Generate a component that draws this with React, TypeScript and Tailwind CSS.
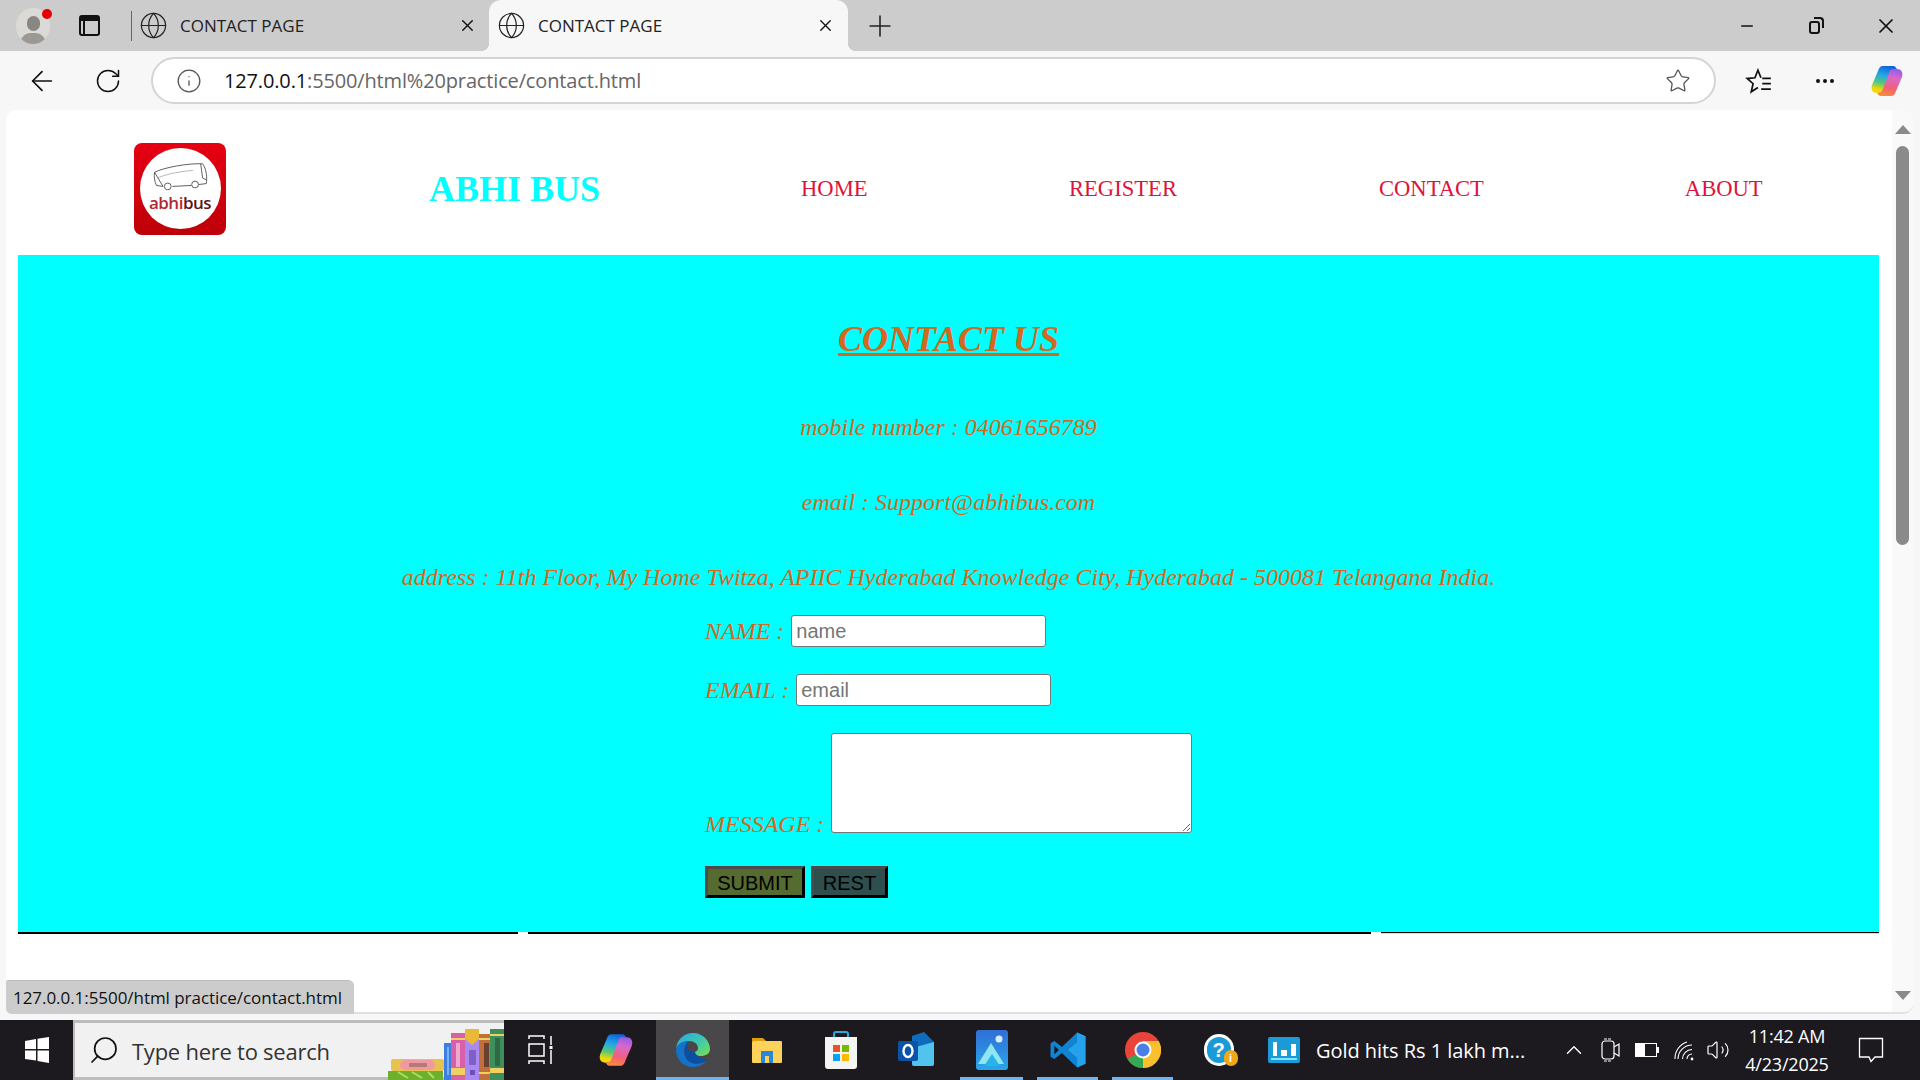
import React from "react";
import { ArrowLeft, RotateCw, Info, Star, MoreHorizontal, X, Plus, Minus, Search, Globe, ChevronUp, Volume2 } from "lucide-react";

function Logo() {
  return (
    <div className="w-[92px] h-[92px] rounded-[8px] bg-gradient-to-b from-[#e60012] to-[#bd0009] flex items-center justify-center">
      <div className="w-[81px] h-[81px] rounded-full bg-white flex flex-col items-center justify-center pb-[4px]">
        <svg width="58" height="32" viewBox="0 0 60 34" fill="none" stroke="#444" strokeWidth="0.9">
          <path d="M3 12 C12 7 40 2 54 3 C58 8 59 18 58 24 L50 25 M42 26 L22 27 M12 27 L5 26 C3 22 2 16 3 12 Z" />
          <circle cx="17" cy="27" r="3.6" />
          <circle cx="46" cy="25" r="3.6" />
          <path d="M52 3 L54 18 L58 20" />
          <path d="M6 18 C18 13 32 11 44 10" stroke="#aaa" />
        </svg>
        <div className="text-[17px] leading-[20px] font-semibold tracking-[-0.5px] font-['Open_Sans',sans-serif]">
          <span className="text-[#b5272e]">abhi</span>
          <span className="text-[#5c1414]">bus</span>
        </div>
      </div>
    </div>
  );
}

function TabFace() {
  return (
    <>
      <Globe size={29} strokeWidth={1} className="text-[#222] shrink-0" />
      <span className="ml-[12px] text-[17px] text-[#222] font-['Open_Sans',sans-serif] flex-1">CONTACT PAGE</span>
      <X size={19} strokeWidth={1.7} className="text-[#111] shrink-0" />
    </>
  );
}

function Copilot({ size = 36 }: { size?: number }) {
  const ribbon = "M14 3 C11 3 10 5 9 8 L3 22 C1.5 27 4 30 8 30 L12 30 C14 30 15 29 16 26 L22 10 C23 7 25 6 28 6 L27 5 C26 3 25 3 23 3 Z";
  return (
    <svg width={size} height={size} viewBox="0 0 36 36">
      <defs>
        <linearGradient id="cpa" x1="0.6" y1="0" x2="0.4" y2="1">
          <stop offset="0" stopColor="#1560d8" />
          <stop offset="0.35" stopColor="#20a8e8" />
          <stop offset="0.65" stopColor="#58c878" />
          <stop offset="0.9" stopColor="#f2d808" />
        </linearGradient>
        <linearGradient id="cpb" x1="0.6" y1="0" x2="0.4" y2="1">
          <stop offset="0" stopColor="#f88a3a" />
          <stop offset="0.3" stopColor="#f2607a" />
          <stop offset="0.7" stopColor="#d868c8" />
          <stop offset="1" stopColor="#9a5ce8" />
        </linearGradient>
      </defs>
      <path d={ribbon} fill="url(#cpa)" />
      <path d={ribbon} fill="url(#cpb)" transform="rotate(180 18 18)" />
    </svg>
  );
}

function Edge() {
  return (
    <svg width="36" height="36" viewBox="0 0 36 36">
      <defs>
        <linearGradient id="eg" x1="0" y1="0" x2="1" y2="0.8">
          <stop offset="0" stopColor="#2aa8e4" />
          <stop offset="0.6" stopColor="#3cc8b0" />
          <stop offset="1" stopColor="#70dc60" />
        </linearGradient>
      </defs>
      <path d="M1 18 C1 8 9 1 18 1 C28 1 35 9 35 17 C35 22 30 24 26 24 C22 24 20 22 20 20 C22 19 23 18 23 16 C23 12 19 9 14 9 C7 9 1 13 1 18 Z" fill="url(#eg)" />
      <path d="M1 18 C1 13 7 9 14 9 C9 12 8 20 11 26 C14 32 24 34 32 28 C28 33 23 35 18 35 C8 35 1 27 1 18 Z" fill="#1273c9" />
      <path d="M11 26 C8 20 9 12 14 9 C11 14 12 20 20 20 C20 24 26 26 32 28 C24 34 14 32 11 26 Z" fill="#0b4ea2" />
    </svg>
  );
}

function Folder() {
  return (
    <svg width="32" height="32" viewBox="0 0 32 32">
      <path d="M1 4 h11 l3 3 h-14 z" fill="#d9a00c" />
      <rect x="1" y="7" width="30" height="22" rx="1" fill="#fcd25a" />
      <rect x="10" y="17" width="12" height="12" fill="#2a86d6" />
      <rect x="14" y="22" width="4" height="7" fill="#fcd25a" />
    </svg>
  );
}

function Store() {
  return (
    <svg width="34" height="40" viewBox="0 0 34 40">
      <path d="M10 8 V4 a2 2 0 0 1 2 -2 h10 a2 2 0 0 1 2 2 V8" fill="none" stroke="#2aa8e0" strokeWidth="2" />
      <path d="M1 7 h32 v29 a3 3 0 0 1 -3 3 h-26 a3 3 0 0 1 -3 -3 z" fill="#f4f4f4" />
      <rect x="9" y="15" width="7" height="7" fill="#e8512a" />
      <rect x="18" y="15" width="7" height="7" fill="#7ab800" />
      <rect x="9" y="24" width="7" height="7" fill="#00a4ef" />
      <rect x="18" y="24" width="7" height="7" fill="#ffb900" />
    </svg>
  );
}

function Outlook() {
  return (
    <svg width="36" height="36" viewBox="0 0 36 36">
      <path d="M14 4 L26 0 L36 10 V32 a2 2 0 0 1 -2 2 H16 a2 2 0 0 1 -2 -2 Z" fill="#0f6cbd" />
      <path d="M14 16 L36 10 V32 a2 2 0 0 1 -2 2 H16 a2 2 0 0 1 -2 -2 Z" fill="#50c4ee" />
      <rect x="0" y="9" width="20" height="20" rx="2" fill="#0a53a8" />
      <ellipse cx="10" cy="19" rx="4.5" ry="6" fill="none" stroke="#fff" strokeWidth="2.4" />
    </svg>
  );
}

function Photos() {
  return (
    <svg width="32" height="40" viewBox="0 0 32 40">
      <defs>
        <linearGradient id="pg" x1="0" y1="0" x2="0" y2="1">
          <stop offset="0" stopColor="#2f6fd6" />
          <stop offset="1" stopColor="#2aa6e8" />
        </linearGradient>
      </defs>
      <rect width="32" height="40" rx="3" fill="url(#pg)" />
      <circle cx="23" cy="9" r="3.5" fill="#d8ecff" />
      <path d="M2 34 L15 13 L28 34 Z" fill="#8fe6f2" />
      <path d="M8 36 L16 24 L24 36 Z" fill="#26b4e8" />
    </svg>
  );
}

function VSCode() {
  return (
    <svg width="38" height="42" viewBox="0 0 100 100">
      <path d="M74 4 L96 14 V86 L74 96 L34 58 L14 74 L4 68 V32 L14 26 L34 42 Z M74 28 L48 50 L74 72 Z M14 38 V62 L26 50 Z" fill="#0f84d4" fillRule="evenodd" />
      <path d="M74 4 L96 14 V86 L74 96 Z M74 28 V72 L48 50 Z" fill="#25a2ec" fillRule="evenodd" />
    </svg>
  );
}

function Chrome() {
  return (
    <svg width="36" height="36" viewBox="0 0 36 36">
      <circle cx="18" cy="18" r="18" fill="#e8443a" />
      <path d="M18 18 L2.4 27 A18 18 0 0 0 18 36 L27 18 Z" fill="#34a853" />
      <path d="M18 18 L18 36 A18 18 0 0 0 33.6 9 L18 9 Z" fill="#fbc02d" />
      <circle cx="18" cy="18" r="8.5" fill="#fff" />
      <circle cx="18" cy="18" r="6.5" fill="#4a7fe8" />
    </svg>
  );
}

function Help() {
  return (
    <div className="relative w-[34px] h-[32px]">
      <div className="w-[30px] h-[32px] rounded-full bg-white flex items-center justify-center">
        <div className="w-[24px] h-[26px] rounded-full bg-[#1a9ad6] flex items-center justify-center text-white font-bold text-[20px] font-['Liberation_Sans',sans-serif]">?</div>
      </div>
      <div className="absolute right-0 bottom-0 w-[14px] h-[16px] rounded-full bg-[#f0a818] text-white text-[11px] font-bold flex items-center justify-center font-['Liberation_Sans',sans-serif]">i</div>
    </div>
  );
}

function Books() {
  return (
    <svg width="116" height="51" viewBox="0 0 116 51" className="absolute right-0 bottom-[-3px]">
      <rect x="0" y="42" width="55" height="9" fill="#6cb02e" />
      <path d="M10 43 L20 49 M24 43 L34 49 M40 43 L46 49" stroke="#b4dc58" strokeWidth="2" />
      <rect x="3" y="30" width="53" height="12" rx="2" fill="#e8c24e" />
      <rect x="12" y="31" width="35" height="10" rx="5" fill="#ee9aa0" />
      <rect x="21" y="34" width="18" height="4" fill="#b57a7a" />
      <rect x="56" y="14" width="7" height="37" fill="#3d7fe0" />
      <rect x="59" y="18" width="2" height="28" fill="#7ab0f4" />
      <rect x="63" y="4" width="14" height="47" fill="#d860a8" />
      <rect x="63" y="9" width="14" height="2" fill="#f0d060" />
      <rect x="68" y="14" width="4" height="24" fill="#f0a8d0" />
      <rect x="63" y="39" width="14" height="7" fill="#f0d060" />
      <rect x="77" y="0" width="14" height="51" fill="#a98af0" />
      <path d="M77 0 H91 V10 L84 16 L77 10 Z" fill="#e8b838" />
      <rect x="81" y="21" width="7" height="15" rx="1" fill="#8060c8" />
      <rect x="82" y="41" width="5" height="5" fill="#7050b8" />
      <rect x="91" y="5" width="12" height="46" fill="#c07038" />
      <rect x="91" y="9" width="12" height="2" fill="#f0d060" />
      <rect x="96" y="14" width="5" height="24" fill="#6b4030" />
      <rect x="91" y="43" width="12" height="2" fill="#f0d060" />
      <rect x="102" y="0" width="14" height="51" fill="#3f8f5c" />
      <rect x="102" y="5" width="14" height="2" fill="#f0d060" />
      <rect x="107" y="9" width="5" height="28" fill="#2d6a45" />
      <rect x="102" y="39" width="14" height="5" fill="#f0d060" />
    </svg>
  );
}

const TaskSlot = ({ w, active, bar, children }: { w: string; active?: boolean; bar?: boolean; children: React.ReactNode }) => (
  <div className={`${w} h-full relative flex items-center justify-center shrink-0 ${active ? "bg-[#4a474b]" : ""}`}>
    {children}
    {bar && <div className={`absolute bottom-0 h-[3px] bg-[#6fb4ee] ${active ? "left-0 right-0" : "left-[7px] right-[7px]"}`} />}
  </div>
);

export default function App() {
  return (
    <div className="w-[1920px] h-[1080px] overflow-hidden flex flex-col bg-[#f7f7f7] font-['Open_Sans',sans-serif]">
      {/* Tab strip */}
      <div className="h-[51px] bg-[#cccccc] flex items-end shrink-0">
        <div className="w-[66px] h-full flex items-center justify-center relative shrink-0">
          <div className="w-[34px] h-[36px] rounded-full bg-[#dcdad6] flex flex-col items-center justify-end overflow-hidden">
            <div className="w-[13px] h-[15px] rounded-full bg-[#8a8682] mb-[2px]" />
            <div className="w-[26px] h-[11px] rounded-t-full bg-[#9c9894]" />
          </div>
          <div className="absolute w-[10px] h-[10px] rounded-full bg-[#e60000] left-[42px] top-[9px]" />
        </div>
        <div className="w-[38px] h-full flex items-center justify-center ml-[4px] shrink-0">
          <div className="w-[21px] h-[21px] rounded-[3px] border-2 border-[#111] border-t-[6px] flex">
            <div className="w-[4px] border-r-2 border-[#111]" />
          </div>
        </div>
        <div className="w-px h-[30px] bg-[#666] ml-[23px] mb-[10px] shrink-0" />
        <div className="w-[357px] h-full flex items-center pl-[7px] pr-[12px] shrink-0">
          <TabFace />
        </div>
        <div className="w-[359px] h-[51px] bg-[#f7f7f7] rounded-t-[12px] flex items-center pl-[8px] pr-[13px] shrink-0 relative">
          <div className="absolute -left-[8px] bottom-0 w-[8px] h-[8px] bg-[radial-gradient(circle_at_0_0,transparent_8px,#f7f7f7_8px)]" />
          <div className="absolute -right-[8px] bottom-0 w-[8px] h-[8px] bg-[radial-gradient(circle_at_100%_0,transparent_8px,#f7f7f7_8px)]" />
          <TabFace />
        </div>
        <div className="h-full flex items-center ml-[15px] shrink-0">
          <Plus size={34} strokeWidth={1.1} className="text-[#222]" />
        </div>
        <div className="flex-1" />
        <div className="h-full flex items-center shrink-0">
          <div className="w-[58px] flex justify-center"><Minus size={18} strokeWidth={2} className="text-[#111]" /></div>
          <div className="w-[76px] flex justify-center">
            <div className="w-[11px] h-[13px] rounded-[3px] border-2 border-[#111] relative mt-[3px]">
              <div className="absolute -top-[6px] -right-[6px] w-[10px] h-[11px] rounded-tr-[4px] border-t-2 border-r-2 border-[#111]" />
            </div>
          </div>
          <div className="w-[68px] flex justify-center"><X size={24} strokeWidth={1.7} className="text-[#111]" /></div>
        </div>
      </div>

      {/* Toolbar */}
      <div className="h-[59px] flex items-center shrink-0">
        <div className="w-[82px] pl-[2px] flex justify-center shrink-0"><ArrowLeft size={32} strokeWidth={1.3} className="text-[#111]" /></div>
        <div className="w-[54px] pr-[2px] flex justify-center shrink-0"><RotateCw size={28} strokeWidth={1.3} className="text-[#111]" /></div>
        <div className="w-[1565px] h-[47px] rounded-full border-2 border-[#d4d4d4] bg-white flex items-center ml-[15px] shrink-0">
          <Info size={26} strokeWidth={1.2} className="text-[#555] ml-[23px]" />
          <div className="ml-[22px] text-[20px] tracking-[-0.15px] text-[#666]">
            <span className="text-[#111]">127.0.0.1</span>:5500/html%20practice/contact.html
          </div>
          <div className="flex-1" />
          <Star size={26} strokeWidth={1.2} className="text-[#555] mr-[23px]" />
        </div>
        <div className="w-[86px] flex justify-center shrink-0">
          <svg width="28" height="26" viewBox="0 0 26 24" fill="none" stroke="#111" strokeWidth="1.6">
            <path d="M14.8 9 L12 2 L9.2 9 L2 9.7 L7.5 14.5 L5.8 22 L12 18" />
            <path d="M16 9.5 H24 M16 14.5 H24 M15 19.5 H24" />
          </svg>
        </div>
        <div className="w-[46px] flex justify-center shrink-0"><MoreHorizontal size={24} strokeWidth={2} className="text-[#111]" /></div>
        <div className="w-[72px] pl-[21px] flex shrink-0"><Copilot size={36} /></div>
      </div>

      {/* Viewport */}
      <div className="h-[904px] ml-[6px] mr-[7px] bg-white rounded-t-[10px] rounded-br-[10px] rounded-bl-[6px] border-b-2 border-[#e0e0e0] flex shrink-0 relative font-['Liberation_Serif',serif]">
        <div className="flex-1 pl-[12px] pr-[13px] min-w-0">
          <div className="h-[145px] pt-[12px] flex items-center text-[#dc143c] text-[22.6px]">
            <div className="ml-[116px] shrink-0"><Logo /></div>
            <div className="ml-[203px] text-[36px] font-bold text-[#00ffff] leading-none shrink-0 w-[172px]">ABHI BUS</div>
            <div className="ml-[200px] w-[66px] shrink-0">HOME</div>
            <div className="ml-[202px] shrink-0">REGISTER</div>
            <div className="ml-[202px] shrink-0">CONTACT</div>
            <div className="ml-[201px] shrink-0">ABOUT</div>
          </div>
          <div className="h-[677px] bg-[#00ffff] flex flex-col items-center text-[#d2691e]">
            <div className="mt-[63px] text-[36px] leading-[42px] font-bold italic underline">CONTACT US</div>
            <div className="mt-[53px] text-[24px] leading-[28px] italic">mobile number : 04061656789</div>
            <div className="mt-[47px] text-[24px] leading-[28px] italic">email : Support@abhibus.com</div>
            <div className="mt-[47px] text-[24px] leading-[28px] italic">address : 11th Floor, My Home Twitza, APIIC Hyderabad Knowledge City, Hyderabad - 500081 Telangana India.</div>
            <div className="self-start ml-[687px] mt-[24px] text-[24px] italic leading-[28px]">
              <div className="flex items-center h-[32px]">
                <span>NAME :</span>
                <input placeholder="name" className="ml-[7px] w-[255px] h-[32px] bg-white border border-[#767676] rounded-[3px] px-[4px] not-italic text-[20px] font-['Liberation_Sans',sans-serif] placeholder:text-[#757575]" />
              </div>
              <div className="flex items-center h-[32px] mt-[27px]">
                <span>EMAIL :</span>
                <input placeholder="email" className="ml-[7px] w-[255px] h-[32px] bg-white border border-[#767676] rounded-[3px] px-[4px] not-italic text-[20px] font-['Liberation_Sans',sans-serif] placeholder:text-[#757575]" />
              </div>
              <div className="flex items-end mt-[27px] h-[100px]">
                <span className="mb-[-5px]">MESSAGE :</span>
                <textarea className="ml-[7px] w-[361px] h-[100px] bg-white border border-[#767676] rounded-[3px]" />
              </div>
              <div className="flex mt-[33px] gap-[6px] not-italic text-[20px] font-['Liberation_Sans',sans-serif] text-black">
                <button className="w-[100px] h-[32px] pb-[2px] bg-[#556b2f] border-[3px] border-t-[#4b4b4b] border-l-[#4b4b4b] border-r-black border-b-black">SUBMIT</button>
                <button className="w-[77px] h-[32px] pb-[2px] bg-[#2f4f4f] border-[3px] border-t-[#4b4b4b] border-l-[#4b4b4b] border-r-black border-b-black">REST</button>
              </div>
            </div>
          </div>
          <div className="flex h-[2px]">
            <div className="w-[500px] bg-black" />
            <div className="w-[843px] ml-[10px] bg-black" />
            <div className="flex-1 ml-[10px] bg-black border-b border-[#d8d8d8]" />
          </div>
        </div>
        <div className="w-[21px] bg-[#f9f9f9] rounded-br-[10px] rounded-tr-[10px] flex flex-col items-center justify-between pt-[15px] pb-[12px] shrink-0">
          <div className="flex flex-col items-center">
            <div className="w-0 h-0 border-l-[8px] border-r-[8px] border-b-[9px] border-l-transparent border-r-transparent border-b-[#8a8a8a]" />
            <div className="w-[13px] h-[399px] rounded-full bg-[#8a8a8a] mt-[12px]" />
          </div>
          <div className="w-0 h-0 border-l-[8px] border-r-[8px] border-t-[9px] border-l-transparent border-r-transparent border-t-[#8a8a8a]" />
        </div>
        <div className="absolute left-0 bottom-[-2px] w-[348px] h-[34px] bg-[#cccccc] rounded-tr-[6px] rounded-bl-[6px] rounded-tl-[2px] border-t border-[#bdbdbd] flex items-center pl-[7px] text-[17px] text-[#111] tracking-[-0.05px] font-['Open_Sans',sans-serif]">
          127.0.0.1:5500/html practice/contact.html
        </div>
      </div>
      <div className="h-[6px] shrink-0" />

      {/* Taskbar */}
      <div className="flex-1 bg-[#1c1a1f] flex items-center font-['Open_Sans',sans-serif]">
        <div className="w-[73px] h-full flex items-center justify-center shrink-0">
          <svg width="24" height="26" viewBox="0 0 24 26" fill="#fff">
            <path d="M0 4 L11 2 V12 H0 Z M12.5 1.8 L24 0 V12 H12.5 Z M0 13.5 H11 V23.5 L0 22 Z M12.5 13.5 H24 V26 L12.5 24 Z" />
          </svg>
        </div>
        <div className="w-[431px] h-full bg-[#f1f1f1] border-t-[3px] border-b-[3px] border-l-[2px] border-[#bdbdbd] relative flex items-center shrink-0">
          <Search size={32} strokeWidth={1.3} className="text-[#111] ml-[13px] -scale-x-100" />
          <span className="ml-[12px] text-[22px] leading-[30px] pt-[1px] text-[#333] tracking-[-0.25px]">Type here to search</span>
          <Books />
        </div>
        <TaskSlot w="w-[72px]">
          <svg width="26" height="30" viewBox="0 0 26 30" fill="none" stroke="#fff" strokeWidth="1.5">
            <path d="M2 4 V1 H17 V4 M2 9 H17 V21 H2 Z M2 29 V26 H17 V29 M24 1 V10 M24 15 V29" />
            <rect x="22.5" y="11" width="3" height="3" fill="#fff" stroke="none" />
          </svg>
        </TaskSlot>
        <TaskSlot w="w-[80px]"><Copilot size={38} /></TaskSlot>
        <TaskSlot w="w-[73px]" active bar><Edge /></TaskSlot>
        <TaskSlot w="w-[75px]"><Folder /></TaskSlot>
        <TaskSlot w="w-[74px]"><Store /></TaskSlot>
        <TaskSlot w="w-[75px]"><Outlook /></TaskSlot>
        <TaskSlot w="w-[77px]" bar><Photos /></TaskSlot>
        <TaskSlot w="w-[75px]" bar><VSCode /></TaskSlot>
        <TaskSlot w="w-[75px]" bar><Chrome /></TaskSlot>
        <TaskSlot w="w-[81px]"><Help /></TaskSlot>
        <div className="w-[32px] h-[26px] bg-[#1a9ad6] rounded-[2px] flex flex-col justify-end items-center pb-[3px] ml-[7px] shrink-0">
          <div className="flex items-end gap-[4px]">
            <div className="w-[4px] h-[14px] bg-white" />
            <div className="w-[6px] h-[6px] bg-white" />
            <div className="w-[5px] h-[12px] bg-white" />
          </div>
          <div className="w-[26px] h-[2px] bg-[#7fe4f4] mt-[2px]" />
        </div>
        <span className="ml-[16px] text-[20px] leading-[28px] pt-[1px] text-white tracking-[-0.05px] whitespace-nowrap w-[210px] shrink-0">Gold hits Rs 1 lakh m...</span>
        <ChevronUp size={26} strokeWidth={1.3} className="text-white ml-[35px] shrink-0" />
        <svg width="20" height="24" viewBox="0 0 20 24" fill="none" stroke="#fff" strokeWidth="1.2" className="ml-[14px] shrink-0">
          <path d="M3 1 H11 M3 23 H11" strokeDasharray="3 1" />
          <rect x="1" y="3" width="12" height="18" rx="3" />
          <path d="M13 9 L18 6 V18 L13 15" />
        </svg>
        <div className="ml-[14px] w-[22px] h-[14px] border border-white flex relative shrink-0">
          <div className="w-[9px] bg-white" />
          <div className="absolute -right-[3px] top-[3px] w-[2px] h-[6px] bg-white" />
        </div>
        <svg width="22" height="24" viewBox="0 0 22 24" fill="none" stroke="#fff" strokeWidth="1.1" className="ml-[17px] shrink-0">
          <path d="M13 21 A5 5 0 0 1 18 16 M8.5 21 A9.5 9.5 0 0 1 18 11.5 M4 21 A14 14 0 0 1 18 7 M1 21 A17 17 0 0 1 13 4" />
          <circle cx="18" cy="21" r="1.4" fill="#fff" stroke="none" />
        </svg>
        <Volume2 size={24} strokeWidth={1.2} className="text-white ml-[10px] shrink-0" />
        <div className="ml-[15px] w-[84px] flex flex-col items-center text-white text-[18px] leading-[28px] tracking-[-0.2px] shrink-0">
          <span>11:42 AM</span>
          <span>4/23/2025</span>
        </div>
        <svg width="26" height="26" viewBox="0 0 26 26" fill="none" stroke="#fff" strokeWidth="1.3" className="ml-[29px] shrink-0">
          <path d="M1.5 1.5 H24.5 V20 H17 L13 24.5 L11 20 H1.5 Z" />
        </svg>
      </div>
    </div>
  );
}
